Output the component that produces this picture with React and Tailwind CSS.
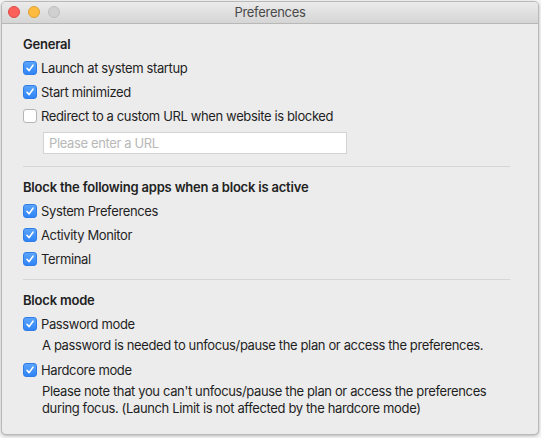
import React from 'react';

const font = { fontFamily: 'Inter, "Liberation Sans", sans-serif' };

function Check({ checked }) {
  if (!checked) {
    return (
      <span className="w-[14px] h-[14px] rounded-[3px] bg-white border border-[#b5b5b5] shrink-0" />
    );
  }
  return (
    <span className="w-[14px] h-[14px] rounded-[3px] bg-gradient-to-b from-[#5aa4fb] to-[#2f84f6] border border-[#2f7ee8] shrink-0 flex items-center justify-center">
      <svg width="10" height="10" viewBox="0 0 10 10">
        <path d="M2 5.3 L4.1 7.6 L8 2.2" fill="none" stroke="white" strokeWidth="1.6" strokeLinecap="round" strokeLinejoin="round" />
      </svg>
    </span>
  );
}

function Option({ checked, label, children }) {
  return (
    <div>
      <div className="flex items-center gap-[4px] h-[24px]">
        <Check checked={checked} />
        <span>{label}</span>
      </div>
      {children}
    </div>
  );
}

function Heading({ children }) {
  return <div className="font-semibold h-[24px] flex items-center text-[#222] tracking-[-0.2px]">{children}</div>;
}

export default function App() {
  return (
    <div className="w-[541px] h-[438px] bg-[#f4f4f4] pt-[1px] pl-[1px]" style={font}>
      <div className="w-[538px] h-[434px] rounded-[5px] border border-[#b9b9b9] bg-[#ececec] overflow-hidden shadow-[0_1px_3px_rgba(0,0,0,0.25)] flex flex-col">
        {/* Title bar */}
        <div className="h-[22px] bg-gradient-to-b from-[#ebebeb] to-[#d5d5d5] border-b border-[#b8b8b8] relative flex items-center justify-center shrink-0">
          <div className="absolute left-[6px] top-[4px] flex gap-[8px]">
            <span className="w-[12px] h-[12px] rounded-full bg-[#fc605b] border border-[#de4a45]" />
            <span className="w-[12px] h-[12px] rounded-full bg-[#fdbc40] border border-[#dea032]" />
            <span className="w-[12px] h-[12px] rounded-full bg-[#d0d0d0] border border-[#bdbdbd]" />
          </div>
          <span className="text-[13px] text-[#4a4a4a] tracking-[-0.3px]">Preferences</span>
        </div>

        {/* Content */}
        <div className="px-[21px] pt-[8px] text-[13px] text-[#1f1f1f] leading-[16px] tracking-[-0.37px]">
          <Heading>General</Heading>
          <Option checked label="Launch at system startup" />
          <Option checked label="Start minimized" />
          <Option checked={false} label="Redirect to a custom URL when website is blocked" />
          <div className="pl-[20px] pt-[4px]">
            <div className="w-[304px] h-[22px] bg-white border border-[#d3d3d3] flex items-center px-[5px] text-[#b8b8b8]">
              Please enter a URL
            </div>
          </div>
          <div className="h-px bg-[#d6d6d6] w-[487px] mt-[12px] mb-[8px]" />

          <Heading>Block the following apps when a block is active</Heading>
          <Option checked label="System Preferences" />
          <Option checked label="Activity Monitor" />
          <Option checked label="Terminal" />
          <div className="h-px bg-[#d6d6d6] w-[487px] mt-[8px] mb-[8px]" />

          <Heading>Block mode</Heading>
          <Option checked label="Password mode">
            <p className="pl-[19px] pt-[1px] pb-[4px] leading-[17px]">
              A password is needed to unfocus/pause the plan or access the preferences.
            </p>
          </Option>
          <Option checked label="Hardcore mode">
            <p className="pl-[19px] pt-[1px] leading-[17px] w-[490px]">
              Please note that you can't unfocus/pause the plan or access the preferences during focus. (Launch Limit is not affected by the hardcore mode)
            </p>
          </Option>
        </div>
      </div>
    </div>
  );
}
